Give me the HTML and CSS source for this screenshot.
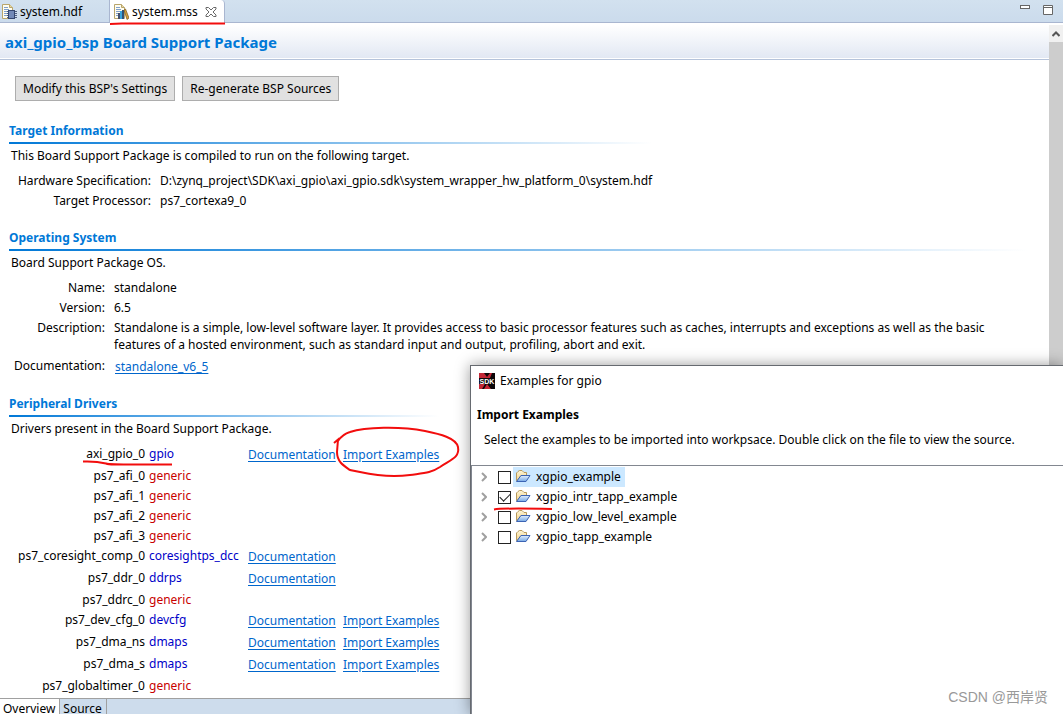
FILE: index.html
```html
<!DOCTYPE html>
<html lang="en">
<head>
<meta charset="utf-8">
<title>system.mss</title>
<link rel="stylesheet" href="styles.css">
</head>
<body>
<svg class="defs" width="0" height="0" aria-hidden="true">
  <defs>
    <linearGradient id="flap" x1="0" y1="0" x2="0" y2="1"><stop offset="0" stop-color="#fdf6d8"/><stop offset="1" stop-color="#f3d084"/></linearGradient>
    <linearGradient id="front" x1="0" y1="0" x2="0" y2="1"><stop offset="0" stop-color="#e3effc"/><stop offset="1" stop-color="#76a8e6"/></linearGradient>
  </defs>
  <symbol id="folder" viewBox="0 0 16 14">
    <path d="M1.5 10.5V3L3 1.500L4.500 .5H7L9 2.500H11.500V5.500H6L2 11Z" fill="url(#flap)" stroke="#b99a5c"/>
    <path d="M1.500 11.500L6 5.500H15L11 11.500Z" fill="url(#front)" stroke="#3c64b4"/>
  </symbol>
  <symbol id="page" viewBox="0 0 16 16">
    <path d="M1.5 .5H8.5L11.5 3.5V14.5H1.5Z" fill="#fffdf0" stroke="#b8a56c"/>
    <path d="M8.5 .5V3.5H11.5" fill="#e7d9a4" stroke="#b8a56c"/>
    <path d="M3 3.5H7M3 5.5H8M3 7.5H7M3 9.5H6M3 11.5H6" stroke="#7fa0cc"/>
  </symbol>
</svg>

<div class="workbench">
  <div class="tabs">
    <div class="tab">
      <svg class="tab-icon" width="16" height="16" viewBox="0 0 16 16"><use href="#page"/><path d="M6 7.5H16M6 9.5H16M6 11.5H16M6 13.5H16" stroke="#4e5f82"/><rect x="7.500" y="6.500" width="6" height="8" fill="#7189b8" stroke="#334670"/></svg>
      <span>system.hdf</span>
    </div>
    <div class="tab tab-active">
      <svg class="tab-icon" width="16" height="16" viewBox="0 0 16 16"><use href="#page"/><path d="M5 15V9H7V15Z" fill="#44506c"/><path d="M7 15V7H9V15Z" fill="#38a4dc"/><path d="M9 15V6H11V15Z" fill="#315277"/><path d="M11 6L12.500 5L16 14L14 15.500Z" fill="#d9a53c" stroke="#76551c" stroke-width=".7"/></svg>
      <span>system.mss</span>
      <button class="tab-close" aria-label="Close"><svg width="12" height="12" viewBox="0 0 12 12"><path d="M1 1.500H3.500L6 4L8.500 1.500H11V3L8 6L11 9V10.500H8.500L6 8L3.500 10.500H1V9L4 6L1 3Z" fill="#fff" stroke="#686868"/></svg></button>
    </div>
    <div class="window-buttons">
      <button aria-label="Minimize"><svg width="12" height="12" viewBox="0 0 12 12"><rect x="1.500" y="1.500" width="9" height="3" fill="#fff" stroke="#666"/></svg></button>
      <button aria-label="Maximize"><svg width="12" height="12" viewBox="0 0 12 12"><path d="M1.500 1.500H10.500V10.500H1.500ZM1.500 3.500H10.500" fill="#fff" stroke="#666"/></svg></button>
    </div>
  </div>

  <div class="editor">
    <main class="form">
      <h1>axi_gpio_bsp Board Support Package</h1>
      <div class="actions">
        <button>Modify this BSP's Settings</button>
        <button>Re-generate BSP Sources</button>
      </div>

      <section>
        <h2>Target Information</h2>
        <p>This Board Support Package is compiled to run on the following target.</p>
        <dl class="target">
          <dt>Hardware Specification:</dt><dd>D:\zynq_project\SDK\axi_gpio\axi_gpio.sdk\system_wrapper_hw_platform_0\system.hdf</dd>
          <dt>Target Processor:</dt><dd>ps7_cortexa9_0</dd>
        </dl>
      </section>

      <section>
        <h2>Operating System</h2>
        <p>Board Support Package OS.</p>
        <dl>
          <dt>Name:</dt><dd>standalone</dd>
          <dt>Version:</dt><dd>6.5</dd>
          <dt>Description:</dt><dd class="description">Standalone is a simple, low-level software layer. It provides access to basic processor features such as caches, interrupts and exceptions as well as the basic features of a hosted environment, such as standard input and output, profiling, abort and exit.</dd>
          <dt>Documentation:</dt><dd class="doc-link"><a href="#">standalone_v6_5</a></dd>
        </dl>
      </section>

      <section>
        <h2>Peripheral Drivers</h2>
        <p>Drivers present in the Board Support Package.</p>
        <table class="drivers">
          <tr class="linked"><th>axi_gpio_0</th><td class="driver">gpio</td><td class="docs"><a href="#">Documentation</a></td><td><a href="#">Import Examples</a></td></tr>
          <tr><th>ps7_afi_0</th><td class="generic">generic</td><td></td><td></td></tr>
          <tr><th>ps7_afi_1</th><td class="generic">generic</td><td></td><td></td></tr>
          <tr><th>ps7_afi_2</th><td class="generic">generic</td><td></td><td></td></tr>
          <tr><th>ps7_afi_3</th><td class="generic">generic</td><td></td><td></td></tr>
          <tr class="linked"><th>ps7_coresight_comp_0</th><td class="driver">coresightps_dcc</td><td><a href="#">Documentation</a></td><td></td></tr>
          <tr class="linked"><th>ps7_ddr_0</th><td class="driver">ddrps</td><td><a href="#">Documentation</a></td><td></td></tr>
          <tr><th>ps7_ddrc_0</th><td class="generic">generic</td><td></td><td></td></tr>
          <tr class="linked"><th>ps7_dev_cfg_0</th><td class="driver">devcfg</td><td><a href="#">Documentation</a></td><td><a href="#">Import Examples</a></td></tr>
          <tr class="linked"><th>ps7_dma_ns</th><td class="driver">dmaps</td><td><a href="#">Documentation</a></td><td><a href="#">Import Examples</a></td></tr>
          <tr class="linked"><th>ps7_dma_s</th><td class="driver">dmaps</td><td><a href="#">Documentation</a></td><td><a href="#">Import Examples</a></td></tr>
          <tr><th>ps7_globaltimer_0</th><td class="generic">generic</td><td></td><td></td></tr>
        </table>
      </section>
    </main>
    <div class="scrollbar">
      <button aria-label="Scroll up"><svg width="8" height="6" viewBox="0 0 8 6"><path d="M.5 5L4 1.500L7.500 5" fill="none" stroke="#555" stroke-width="2"/></svg></button>
    </div>
  </div>

  <div class="page-tabs">
    <button class="page-active">Overview</button>
    <button>Source</button>
  </div>
</div>

<div class="dialog" role="dialog" aria-label="Examples for gpio">
  <div class="dialog-title">
    <svg width="16" height="16" viewBox="0 0 16 16"><rect width="16" height="16" fill="#0c0608"/><path d="M0 0H5L8 4L11 0H13L11 5H0ZM0 11H6L3 16H0ZM8 11L12 16H5Z" fill="#c22736"/><text class="sdk" x="8" y="11" text-anchor="middle">SDK</text></svg>
    <span>Examples for gpio</span>
  </div>
  <h3>Import Examples</h3>
  <p>Select the examples to be imported into workpsace. Double click on the file to view the source.</p>
  <ul class="tree">
    <li><svg class="chevron" width="6" height="10" viewBox="0 0 6 10"><path d="M1 1L5 5L1 9"/></svg><input type="checkbox" id="ex1"><label class="selected" for="ex1"><svg width="16" height="14"><use href="#folder"/></svg>xgpio_example</label></li>
    <li><svg class="chevron" width="6" height="10" viewBox="0 0 6 10"><path d="M1 1L5 5L1 9"/></svg><input type="checkbox" id="ex2" checked><label for="ex2"><svg width="16" height="14"><use href="#folder"/></svg>xgpio_intr_tapp_example</label></li>
    <li><svg class="chevron" width="6" height="10" viewBox="0 0 6 10"><path d="M1 1L5 5L1 9"/></svg><input type="checkbox" id="ex3"><label for="ex3"><svg width="16" height="14"><use href="#folder"/></svg>xgpio_low_level_example</label></li>
    <li><svg class="chevron" width="6" height="10" viewBox="0 0 6 10"><path d="M1 1L5 5L1 9"/></svg><input type="checkbox" id="ex4"><label for="ex4"><svg width="16" height="14"><use href="#folder"/></svg>xgpio_tapp_example</label></li>
  </ul>
</div>

<svg class="marks" width="1063" height="714" viewBox="0 0 1063 714" aria-hidden="true">
  <path d="M110 24L122 23.500H225"/>
  <path d="M83 461.500C96 461 100 462 106 463.500C110 465 116 464.500 172 464.500"/>
  <path d="M494 509.500C502 508 530 508.500 552 509"/>
  <path d="M334 443L338 439.500L337 452C337 462 344 466 350 470L360 472C378 476 396 477 410 475C424 473 431 473 440 467C450 460 460 458 458 447C456 438 440 434 425 431C400 426 365 427 350 432C343 434 340 438 338 441"/>
</svg>
<div class="watermark">CSDN @西岸贤</div>
</body>
</html>
```
FILE: styles.css
```css
* { box-sizing: border-box; }
body {
  margin: 0;
  height: 100vh;
  overflow: hidden;
  position: relative;
  background: #fff;
  color: #000;
  font: 12px/20px "Noto Sans", "Noto Sans CJK SC", sans-serif;
}
button, input { font: inherit; color: inherit; margin: 0; }
h1, h2, h3, p, dl, dd, ul { margin: 0; padding: 0; }
a { color: #0066cc; text-underline-offset: 2px; }
.defs { position: absolute; }

.workbench { display: flex; flex-direction: column; height: 100%; }

.tabs {
  display: flex;
  flex: none;
  height: 23px;
  background: linear-gradient(#d2e1ef, #cbdbec);
  border-bottom: 1px solid #a9b6d0;
}
.tab { display: flex; align-items: center; gap: 3px; height: 23px; width: 109px; }
.tab-icon { margin-left: 1px; }
.tab-active {
  width: 116px;
  padding-left: 2px;
  background: #fff;
  border: solid #a9b6d0;
  border-width: 0 1px;
  border-radius: 0 4px 0 0;
}
.tab-close { display: flex; padding: 0; border: 0; background: none; margin-left: 4px; }
.window-buttons { display: flex; gap: 11px; margin-left: auto; padding: 4px 9px 0 0; }
.window-buttons button { display: block; height: 12px; padding: 0; border: 0; background: none; line-height: 0; }

.editor { display: flex; flex: 1; min-height: 0; padding-top: 2px; }
.form { flex: 1; min-width: 0; overflow: hidden; }
h1 {
  height: 35px;
  padding-left: 5px;
  border-bottom: 1px solid #b5c3da;
  background: linear-gradient(#fff, #e2e8f3) 0 0 / 100% 33px no-repeat;
  color: #0078d7;
  font-size: 15px;
  line-height: 35px;
}
.actions { display: flex; gap: 7px; padding: 16px 15px 19px; }
.actions button {
  height: 25px;
  padding: 0 7px;
  border: 1px solid #adadad;
  background: #e1e1e1;
  white-space: nowrap;
}

section { width: fit-content; margin-left: 9px; margin-right: 22px; padding-bottom: 16px; }
h2 {
  padding: 1px 0 3px;
  margin-bottom: 2px;
  background: linear-gradient(90deg, #0078d7, #fff) 0 100% / 100% 2px no-repeat;
  color: #0078d7;
  font-size: 12px;
  line-height: 20px;
}
section p { padding-left: 2px; }
dl { display: grid; grid-template-columns: auto 1fr; column-gap: 9px; padding: 5px 0 0 5px; }
.target { grid-template-columns: minmax(137px, auto) 1fr; }
dt { text-align: right; }
.description { line-height: 17px; padding: 1px 0 3px; }
.doc-link { padding: 1px 0 0 1px; }

.drivers { border-collapse: collapse; margin: 5px 0 0 5px; }
.drivers th, .drivers td { padding: 0; vertical-align: top; text-align: left; white-space: nowrap; }
.drivers th { min-width: 131px; font-weight: normal; text-align: right; }
.drivers .driver, .drivers .generic { min-width: 103px; padding-left: 4px; }
.drivers .docs { min-width: 95px; }
.drivers tr { height: 20px; }
.drivers .linked { height: 22px; }
.drivers td a { display: block; padding-top: 1px; }
.drivers .driver { color: #0000c8; }
.drivers .generic { color: #c80000; }

.scrollbar { flex: none; width: 14px; background: #cdcdcd; }
.scrollbar button {
  display: flex;
  align-items: center;
  justify-content: center;
  width: 14px;
  height: 17px;
  padding: 0;
  border: 0;
  background: #f0f0f0;
}

.page-tabs {
  display: flex;
  flex: none;
  align-items: flex-start;
  height: 16px;
  background: #cddcec;
  border-top: 1px solid #a0a0a0;
}
.page-tabs button {
  padding: 1px 4px 0 3px;
  border: 0;
  border-right: 1px solid #a0a0a0;
  background: none;
  line-height: 17px;
}
.page-tabs .page-active { background: #fff; }

.dialog {
  position: absolute;
  left: 470px;
  top: 365px;
  right: 0;
  bottom: 0;
  display: flex;
  flex-direction: column;
  border: solid #666a70;
  border-width: 1px 0 0 1px;
  background: #fff;
  box-shadow: 0 0 14px rgba(0, 0, 0, .4);
}
.dialog-title { display: flex; align-items: center; gap: 5px; height: 30px; padding-left: 8px; }
.sdk { font: bold 7px "Liberation Sans", sans-serif; fill: #fff; }
h3 { padding: 9px 6px 5px; font-size: 12px; line-height: 20px; }
.dialog p { padding: 0 13px 15px; white-space: nowrap; }
.tree {
  flex: 1;
  padding-top: 1px;
  border: solid #828790;
  border-width: 1px 0 0 1px;
  list-style: none;
}
.tree li { display: flex; align-items: center; height: 20px; padding-left: 9px; }
.chevron { fill: none; stroke: #a0a0a0; stroke-width: 2; margin-right: 11px; }
.tree input {
  appearance: none;
  display: grid;
  place-items: center;
  width: 13px;
  height: 13px;
  border: 1px solid #222;
  background: #fff;
}
.tree input:checked::after {
  content: "";
  width: 9px;
  height: 5px;
  margin-bottom: 3px;
  border: solid #222;
  border-width: 0 0 1px 1px;
  transform: rotate(-45deg);
}
.tree label { display: flex; align-items: center; gap: 5px; margin-left: 2px; padding: 0 4px 0 2px; }
.tree .selected { background: #cce8ff; }

.marks { position: absolute; left: 0; top: 0; fill: none; stroke: #f20d0d; stroke-width: 2; pointer-events: none; }
.watermark {
  position: absolute;
  right: 15px;
  bottom: 7px;
  color: #999;
  font: 14px/20px "Liberation Sans", "Noto Sans CJK SC", sans-serif;
}
```
